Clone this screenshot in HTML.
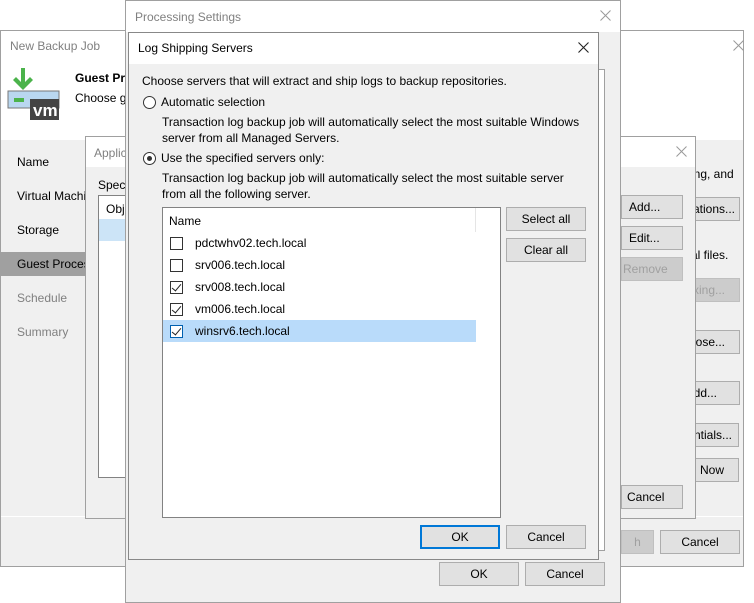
<!DOCTYPE html>
<html><head><meta charset="utf-8"><style>
*{margin:0;padding:0;box-sizing:border-box}
body{width:754px;height:603px;background:#fff;position:relative;overflow:hidden;font-family:"Liberation Sans",sans-serif;font-size:12px;color:#000}
.a{position:absolute}
.win{position:absolute;border:1px solid #a0a0a0;background:#f0f0f0}
.btn{position:absolute;background:#e1e1e1;border:1px solid #adadad;text-align:center;line-height:22px;font-size:12px;height:24px}
.dis{color:#a0a0a0;background:#cccccc;border-color:#bfbfbf}
.x{position:absolute;width:11px;height:11px}
.cb{position:absolute;width:13px;height:13px;border:1px solid #333;background:#fff}
.ck::after{content:"";position:absolute;left:3px;top:0px;width:4px;height:8px;border-right:1.5px solid #222;border-bottom:1.5px solid #222;transform:rotate(40deg)}
.rad{position:absolute;width:13px;height:13px;border:1px solid #333;border-radius:50%;background:#fff}
.t{position:absolute;white-space:nowrap}
</style></head><body>

<!-- Window 1 -->
<div class="win" style="left:0;top:30px;width:744px;height:537px">
 <div class="a" style="left:0;top:0;width:742px;height:109px;background:#fff"></div>
 <div class="t" style="left:9px;top:8px;color:#808080">New Backup Job</div>
 <svg class="x" style="left:732px;top:9px" viewBox="0 0 11 11"><path d="M0.5 0.5L10.5 10.5M10.5 0.5L0.5 10.5" stroke="#999" stroke-width="1"/></svg>
 <svg class="a" style="left:6px;top:36px" width="54" height="54">
  <rect x="1" y="24" width="51" height="17" fill="#b9d7f0" stroke="#777" stroke-width="1"/>
  <rect x="7" y="31" width="10" height="4" fill="#4bb34b"/>
  <path d="M14 1 h4 v14 l5-5 3 3 -10 10 -10-10 3-3 5 5z" fill="#4bb34b"/>
  <rect x="23" y="32" width="29" height="21" fill="#444"/>
  <text x="26" y="49" fill="#fff" font-family="Liberation Sans" font-weight="bold" font-size="17">vm</text>
 </svg>
 <div class="t" style="left:74px;top:40px;font-weight:bold">Guest Processing</div>
 <div class="t" style="left:74px;top:60px">Choose guest</div>
 <div class="t" style="left:16px;top:124px">Name</div>
 <div class="t" style="left:16px;top:158px">Virtual Machines</div>
 <div class="t" style="left:16px;top:192px">Storage</div>
 <div class="a" style="left:0;top:221px;width:90px;height:24px;background:#a0a0a0"></div>
 <div class="t" style="left:16px;top:226px">Guest Processing</div>
 <div class="t" style="left:16px;top:260px;color:#808080">Schedule</div>
 <div class="t" style="left:16px;top:294px;color:#808080">Summary</div>
 <div class="a" style="left:0;top:485px;width:742px;height:1px;background:#fff"></div>
 <div class="t" style="left:690px;top:136px">ing, and</div>
 <div class="btn" style="left:620px;top:166px;width:119px;text-align:right;padding-right:4px">ations...</div>
 <div class="t" style="left:690px;top:217px">al files.</div>
 <div class="btn dis" style="left:620px;top:247px;width:119px;text-align:right;padding-right:14px">xing...</div>
 <div class="btn" style="left:620px;top:299px;width:119px;text-align:right;padding-right:14px">ose...</div>
 <div class="btn" style="left:620px;top:350px;width:119px;text-align:right;padding-right:22px">dd...</div>
 <div class="btn" style="left:620px;top:392px;width:118px;text-align:right;padding-right:6px">ntials...</div>
 <div class="btn" style="left:620px;top:427px;width:118px;text-align:right;padding-right:14px">Now</div>
 <div class="btn dis" style="left:620px;top:499px;width:33px">h</div>
 <div class="btn" style="left:659px;top:499px;width:80px">Cancel</div>
</div>

<!-- Window 2 -->
<div class="win" style="left:85px;top:136px;width:611px;height:383px">
 <div class="a" style="left:0;top:0;width:609px;height:30px;background:#fff"></div>
 <div class="t" style="left:8px;top:9px;color:#808080">Application-Aware Processing</div>
 <svg class="x" style="left:590px;top:9px" viewBox="0 0 11 11"><path d="M0.5 0.5L10.5 10.5M10.5 0.5L0.5 10.5" stroke="#999" stroke-width="1"/></svg>
 <div class="t" style="left:12px;top:41px">Specify</div>
 <div class="a" style="left:12px;top:58px;width:480px;height:283px;background:#fff;border:1px solid #828282"></div>
 <div class="t" style="left:20px;top:65px">Object</div>
 <div class="a" style="left:13px;top:82px;width:60px;height:22px;background:#cce4f7"></div>
 <div class="btn" style="left:535px;top:58px;width:62px;text-align:left;padding-left:7px">Add...</div>
 <div class="btn" style="left:535px;top:89px;width:62px;text-align:left;padding-left:7px">Edit...</div>
 <div class="btn dis" style="left:535px;top:120px;width:62px;text-align:left;padding-left:1px">Remove</div>
 <div class="btn" style="left:535px;top:348px;width:62px;text-align:left;padding-left:5px">Cancel</div>
</div>

<!-- Window 3 -->
<div class="win" style="left:125px;top:0;width:496px;height:603px">
 <div class="a" style="left:0;top:0;width:494px;height:31px;background:#fff"></div>
 <div class="t" style="left:9px;top:9px;color:#808080">Processing Settings</div>
 <svg class="x" style="left:474px;top:9px" viewBox="0 0 11 11"><path d="M0.5 0.5L10.5 10.5M10.5 0.5L0.5 10.5" stroke="#999" stroke-width="1"/></svg>
 <div class="a" style="left:460px;top:68px;width:19px;height:482px;background:#fff;border:1px solid #a0a0a0;border-left:none"></div>
 <div class="btn" style="left:313px;top:561px;width:80px">OK</div>
 <div class="btn" style="left:399px;top:561px;width:80px">Cancel</div>
</div>

<!-- Window 4 -->
<div class="win" style="left:128px;top:32px;width:471px;height:528px;border-color:#888">
 <div class="a" style="left:0;top:0;width:469px;height:31px;background:#fff"></div>
 <div class="t" style="left:9px;top:8px">Log Shipping Servers</div>
 <svg class="x" style="left:449px;top:9px" viewBox="0 0 11 11"><path d="M0.5 0.5L10.5 10.5M10.5 0.5L0.5 10.5" stroke="#222" stroke-width="1.1"/></svg>
 <div class="t" style="left:13px;top:41px">Choose servers that will extract and ship logs to backup repositories.</div>
 <div class="rad" style="left:14px;top:63px"></div>
 <div class="t" style="left:32px;top:62px">Automatic selection</div>
 <div class="t" style="left:33px;top:82px">Transaction log backup job will automatically select the most suitable Windows</div>
 <div class="t" style="left:33px;top:98px">server from all Managed Servers.</div>
 <div class="rad" style="left:14px;top:119px"><div class="a" style="left:3px;top:3px;width:5px;height:5px;border-radius:50%;background:#333"></div></div>
 <div class="t" style="left:32px;top:118px">Use the specified servers only:</div>
 <div class="t" style="left:33px;top:138px">Transaction log backup job will automatically select the most suitable server</div>
 <div class="t" style="left:33px;top:154px">from all the following server.</div>
 <div class="a" style="left:33px;top:174px;width:339px;height:311px;background:#fff;border:1px solid #828282">
  <div class="a" style="left:312px;top:0;width:1px;height:24px;background:#e5e5e5"></div>
  <div class="t" style="left:6px;top:6px">Name</div>
  <div class="a" style="left:0;top:112px;width:313px;height:22px;background:#b9dbfa"></div>
  <div class="cb" style="left:7px;top:29px"></div><div class="t" style="left:32px;top:28px">pdctwhv02.tech.local</div>
  <div class="cb" style="left:7px;top:51px"></div><div class="t" style="left:32px;top:50px">srv006.tech.local</div>
  <div class="cb ck" style="left:7px;top:73px"></div><div class="t" style="left:32px;top:72px">srv008.tech.local</div>
  <div class="cb ck" style="left:7px;top:95px"></div><div class="t" style="left:32px;top:94px">vm006.tech.local</div>
  <div class="cb ck" style="left:7px;top:117px;border-color:#0060b0"></div><div class="t" style="left:32px;top:116px">winsrv6.tech.local</div>
 </div>
 <div class="btn" style="left:377px;top:174px;width:80px">Select all</div>
 <div class="btn" style="left:377px;top:205px;width:80px">Clear all</div>
 <div class="btn" style="left:291px;top:492px;width:80px;border:2px solid #0078d7;line-height:20px">OK</div>
 <div class="btn" style="left:377px;top:492px;width:80px">Cancel</div>
</div>
</body></html>
